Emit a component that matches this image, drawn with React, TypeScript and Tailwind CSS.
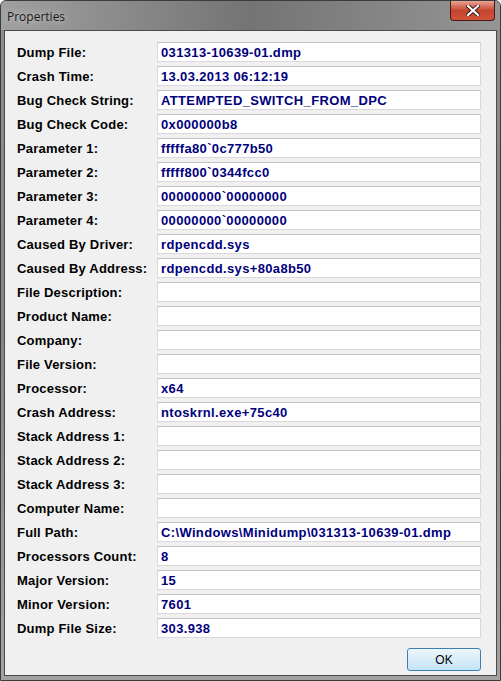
const rows: [string, string][] = [
  ['Dump File:', '031313-10639-01.dmp'],
  ['Crash Time:', '13.03.2013 06:12:19'],
  ['Bug Check String:', 'ATTEMPTED_SWITCH_FROM_DPC'],
  ['Bug Check Code:', '0x000000b8'],
  ['Parameter 1:', 'fffffa80`0c777b50'],
  ['Parameter 2:', 'fffff800`0344fcc0'],
  ['Parameter 3:', '00000000`00000000'],
  ['Parameter 4:', '00000000`00000000'],
  ['Caused By Driver:', 'rdpencdd.sys'],
  ['Caused By Address:', 'rdpencdd.sys+80a8b50'],
  ['File Description:', ''],
  ['Product Name:', ''],
  ['Company:', ''],
  ['File Version:', ''],
  ['Processor:', 'x64'],
  ['Crash Address:', 'ntoskrnl.exe+75c40'],
  ['Stack Address 1:', ''],
  ['Stack Address 2:', ''],
  ['Stack Address 3:', ''],
  ['Computer Name:', ''],
  ['Full Path:', 'C:\\Windows\\Minidump\\031313-10639-01.dmp'],
  ['Processors Count:', '8'],
  ['Major Version:', '15'],
  ['Minor Version:', '7601'],
  ['Dump File Size:', '303.938'],
];

export default function App() {
  return (
    <div
      className="w-[501px] h-[681px] flex flex-col bg-gradient-to-b from-[#8e8e8e] via-[#858585] to-[#a2a2a2] border border-[#3c3c3c] rounded-t-[6px] overflow-hidden"
      style={{ fontFamily: '"Liberation Sans", Arial, sans-serif' }}
    >
      {/* title bar */}
      <div className="h-[29px] flex items-start justify-between pl-[6px] pr-[5px] bg-gradient-to-r from-[#a0a0a0] via-[#747474] to-[#959595]">
        <span className="mt-[7px] text-[12px] text-[#1a1a1a] [text-shadow:0_0_6px_#d8d8d8]" style={{ fontFamily: '"Open Sans", "Noto Sans", sans-serif' }}>
          Properties
        </span>
        <div className="w-[45px] h-[20px] rounded-b-[4px] border border-[#4a1a14] border-t-0 bg-gradient-to-b from-[#e8a394] via-[#c4452e] to-[#d0533a] flex items-center justify-center">
          <svg width="14" height="11" viewBox="0 0 14 11">
            <path d="M2 1 L12 10 M12 1 L2 10" stroke="#3a1410" strokeWidth="4" strokeLinecap="square" />
            <path d="M2 1 L12 10 M12 1 L2 10" stroke="#ffffff" strokeWidth="2.2" strokeLinecap="square" />
          </svg>
        </div>
      </div>

      {/* client area */}
      <div className="flex-1 mx-[3px] mb-[4px] border border-[#4a4a4a] bg-[#f0f0f0] flex flex-col">
        <div className="flex flex-col gap-[4px] pt-[11px] pl-[12px] pr-[15px]">
          {rows.map(([label, value]) => (
            <div key={label} className="flex items-center h-[20px]">
              <div className="w-[140px] text-[13px] font-bold text-black leading-none tracking-[0.2px]">{label}</div>
              <div className="flex-1 h-[20px] bg-white border border-[#d9d9d9] border-t-[#c4c4c4] flex items-center px-[3px] text-[13px] font-bold text-[#00007c] leading-none tracking-[0.35px]">
                {value}
              </div>
            </div>
          ))}
        </div>
        <div className="flex justify-end pr-[15px] mt-[10px]">
          <button className="w-[74px] h-[23px] rounded-[3px] border border-[#3c7fb1] bg-gradient-to-b from-[#ecf6fc] to-[#c4e3f5] text-[12px] text-black">
            OK
          </button>
        </div>
      </div>
    </div>
  );
}
